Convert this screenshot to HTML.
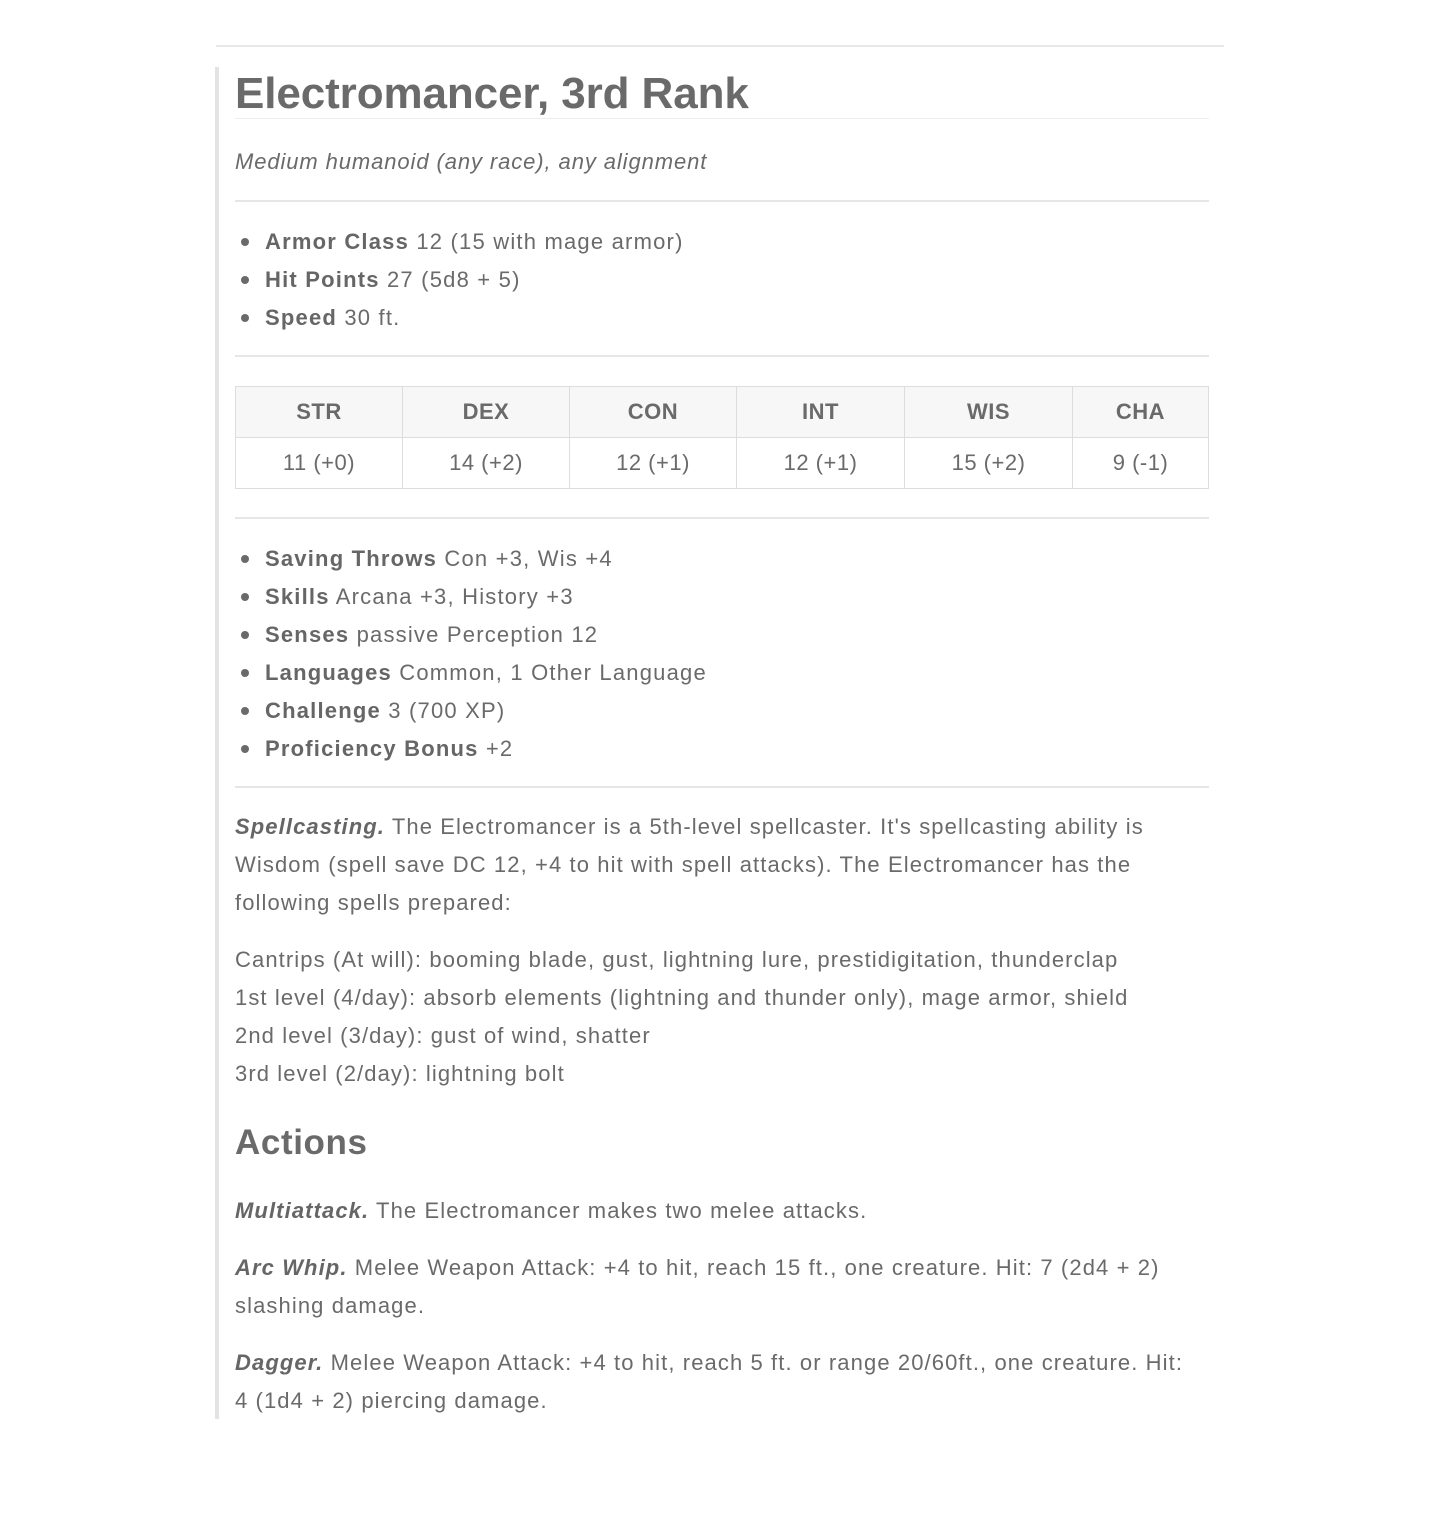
<!DOCTYPE html>
<html><head><meta charset="utf-8"><style>
body{margin:0;background:#fff;width:1440px;height:1539px;position:relative;font-family:"Liberation Sans",sans-serif;color:#6a6a6a;overflow:hidden}
.a{position:absolute;left:235px;white-space:nowrap}
.hr{position:absolute;left:235px;width:974px;height:2px;background:#e6e6e6}
.t{font-size:22px;letter-spacing:1.1px}
b{color:#666}
.li{position:absolute;left:265px;font-size:22px;white-space:nowrap;letter-spacing:1.2px}
.dot{position:absolute;left:241px;width:8px;height:8px;border-radius:50%;background:#6a6a6a}
table{position:absolute;left:235px;top:386px;width:974px;border-collapse:collapse;font-size:22px;letter-spacing:0.5px}
td,th{border:1px solid #ddd;height:50px;text-align:center;padding:0}
th{background:#f7f7f7;font-weight:bold}
</style></head><body>
<div style="position:absolute;left:216px;top:45px;width:1008px;height:2px;background:#e8e8e8"></div>
<div style="position:absolute;left:215px;top:67px;width:4px;height:1352px;background:#e3e3e3"></div>
<div class="a" style="top:69px;font-size:44px;font-weight:bold;letter-spacing:-0.1px">Electromancer, 3rd Rank</div>
<div style="position:absolute;left:235px;top:118px;width:974px;height:1px;background:#eee"></div>
<div class="a t" style="top:149px;font-style:italic;letter-spacing:0.9px">Medium humanoid (any race), any alignment</div>
<div class="hr" style="top:200px"></div>
<div class="dot" style="top:238px"></div><div class="li" style="top:229px"><b>Armor Class</b> 12 (15 with mage armor)</div>
<div class="dot" style="top:276px"></div><div class="li" style="top:267px"><b>Hit Points</b> 27 (5d8 + 5)</div>
<div class="dot" style="top:314px"></div><div class="li" style="top:305px"><b>Speed</b> 30 ft.</div>
<div class="hr" style="top:355px"></div>
<table><tr><th style="width:166px">STR</th><th style="width:166px">DEX</th><th style="width:166px">CON</th><th style="width:167px">INT</th><th style="width:167px">WIS</th><th>CHA</th></tr>
<tr><td>11 (+0)</td><td>14 (+2)</td><td>12 (+1)</td><td>12 (+1)</td><td>15 (+2)</td><td>9 (-1)</td></tr></table>
<div class="hr" style="top:517px"></div>
<div class="dot" style="top:555px"></div><div class="li" style="top:546px"><b>Saving Throws</b> Con +3, Wis +4</div>
<div class="dot" style="top:593px"></div><div class="li" style="top:584px"><b>Skills</b> Arcana +3, History +3</div>
<div class="dot" style="top:631px"></div><div class="li" style="top:622px"><b>Senses</b> passive Perception 12</div>
<div class="dot" style="top:669px"></div><div class="li" style="top:660px"><b>Languages</b> Common, 1 Other Language</div>
<div class="dot" style="top:707px"></div><div class="li" style="top:698px"><b>Challenge</b> 3 (700 XP)</div>
<div class="dot" style="top:745px"></div><div class="li" style="top:736px"><b>Proficiency Bonus</b> +2</div>
<div class="hr" style="top:786px"></div>
<div class="a t" style="top:814px"><b><i>Spellcasting.</i></b> The Electromancer is a 5th-level spellcaster. It's spellcasting ability is</div>
<div class="a t" style="top:852px">Wisdom (spell save DC 12, +4 to hit with spell attacks). The Electromancer has the</div>
<div class="a t" style="top:890px">following spells prepared:</div>
<div class="a t" style="top:947px">Cantrips (At will): booming blade, gust, lightning lure, prestidigitation, thunderclap</div>
<div class="a t" style="top:985px">1st level (4/day): absorb elements (lightning and thunder only), mage armor, shield</div>
<div class="a t" style="top:1023px">2nd level (3/day): gust of wind, shatter</div>
<div class="a t" style="top:1061px">3rd level (2/day): lightning bolt</div>
<div class="a" style="top:1123px;font-size:35px;font-weight:bold;letter-spacing:0.6px">Actions</div>
<div class="a t" style="top:1198px"><b><i>Multiattack.</i></b> The Electromancer makes two melee attacks.</div>
<div class="a t" style="top:1255px"><b><i>Arc Whip.</i></b> Melee Weapon Attack: +4 to hit, reach 15 ft., one creature. Hit: 7 (2d4 + 2)</div>
<div class="a t" style="top:1293px">slashing damage.</div>
<div class="a t" style="top:1350px"><b><i>Dagger.</i></b> Melee Weapon Attack: +4 to hit, reach 5 ft. or range 20/60ft., one creature. Hit:</div>
<div class="a t" style="top:1388px">4 (1d4 + 2) piercing damage.</div>
</body></html>
